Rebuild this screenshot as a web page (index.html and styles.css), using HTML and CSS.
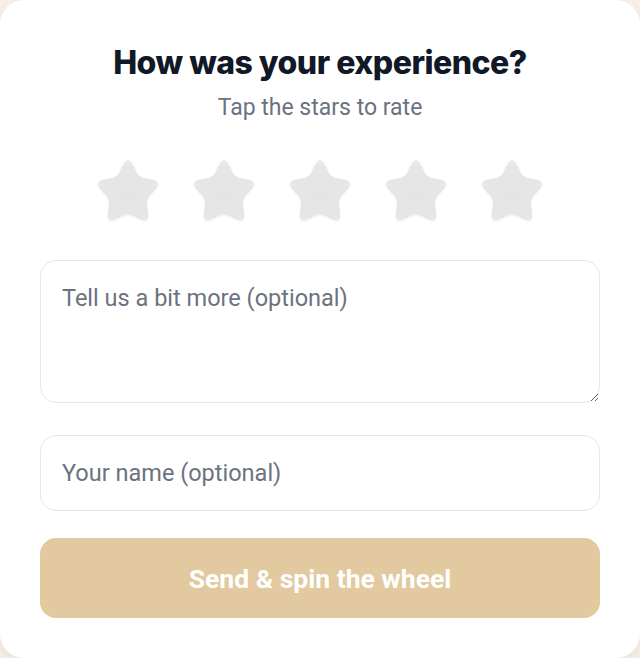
FILE: index.html
```html
<!DOCTYPE html>
<html lang="en">
<head>
<meta charset="utf-8">
<title>Rate your experience</title>
<link rel="stylesheet" href="styles.css">
</head>
<body>
<main class="card">
  <h1 class="title">How was your experience?</h1>
  <p class="subtitle">Tap the stars to rate</p>
  <div class="stars">
    <button class="star" aria-label="1 star"><svg viewBox="6 7.5 52 50" preserveAspectRatio="none"><use href="#star"/></svg></button>
    <button class="star" aria-label="2 stars"><svg viewBox="6 7.5 52 50" preserveAspectRatio="none"><use href="#star"/></svg></button>
    <button class="star" aria-label="3 stars"><svg viewBox="6 7.5 52 50" preserveAspectRatio="none"><use href="#star"/></svg></button>
    <button class="star" aria-label="4 stars"><svg viewBox="6 7.5 52 50" preserveAspectRatio="none"><use href="#star"/></svg></button>
    <button class="star" aria-label="5 stars"><svg viewBox="6 7.5 52 50" preserveAspectRatio="none"><use href="#star"/></svg></button>
  </div>
  <textarea class="field area" placeholder="Tell us a bit more (optional)"></textarea>
  <input class="field line" type="text" placeholder="Your name (optional)">
  <button class="send">Send &amp; spin the wheel</button>
</main>
<svg width="0" height="0" class="defs" aria-hidden="true">
  <defs>
    <radialGradient id="sg" cx="50%" cy="55%" r="55%">
      <stop offset="0" stop-color="#e4e4e4"/>
      <stop offset="0.8" stop-color="#e6e6e6"/>
      <stop offset="1" stop-color="#ebebeb"/>
    </radialGradient>
    <path id="star" fill="url(#sg)" stroke="#e2e2e2" stroke-width="0.6" d="M 27.84 11.98 Q 32 4 36.16 11.98 L 39.09 17.62 Q 41.40 22.06 46.33 22.89 L 52.61 23.93 Q 61.48 25.42 55.18 31.84 L 50.72 36.37 Q 47.21 39.94 47.95 44.89 L 48.90 51.18 Q 50.22 60.08 42.17 56.07 L 36.48 53.23 Q 32 51 27.53 53.22 L 21.83 56.07 Q 13.78 60.08 15.10 51.18 L 16.05 44.89 Q 16.79 39.94 13.28 36.37 L 8.82 31.84 Q 2.52 25.42 11.39 23.93 L 17.67 22.89 Q 22.60 22.06 24.91 17.62 Z"/>
  </defs>
</svg>
</body>
</html>
```

FILE: styles.css
```css
html, body {
  margin: 0;
  padding: 0;
  height: 100%;
}
body {
  background: #f8f1e9;
  font-family: Roboto, "Liberation Sans", sans-serif;
}
.card {
  box-sizing: border-box;
  height: 658px;
  background: #ffffff;
  border-radius: 24px;
  box-shadow: 0 4px 16px rgba(0, 0, 0, 0.08);
  padding: 44px 40px 0;
  display: flex;
  flex-direction: column;
  align-items: center;
}
.title {
  margin: 0;
  font-family: Inter, Roboto, sans-serif;
  font-weight: 800;
  font-size: 32px;
  line-height: 38px;
  letter-spacing: -0.5px;
  color: #111827;
}
.subtitle {
  margin: 10px 0 0;
  font-size: 23px;
  line-height: 32px;
  color: #6b7280;
}
.stars {
  display: flex;
  gap: 36px;
  margin-top: 36px;
}
.star {
  width: 60px;
  height: 60px;
  padding: 0;
  border: 0;
  background: none;
  cursor: pointer;
}
.star svg {
  width: 60px;
  height: 60px;
  display: block;
  overflow: visible;
  filter: drop-shadow(0 1px 1px rgba(0, 0, 0, 0.09));
}
.defs {
  position: absolute;
}
.field {
  box-sizing: border-box;
  width: 100%;
  border: 1px solid #e5e7eb;
  border-radius: 16px;
  font-family: Roboto, "Liberation Sans", sans-serif;
  font-size: 23.5px;
  color: #111827;
  background: #fff;
  outline: none;
}
.field::placeholder {
  color: #6b7280;
}
.area {
  margin-top: 40px;
  height: 143px;
  padding: 22px 21px;
  line-height: 30px;
  resize: vertical;
}
.line {
  margin-top: 32px;
  height: 76px;
  padding: 0 21px;
}
.send {
  margin-top: 27px;
  width: 100%;
  height: 80px;
  border: 0;
  border-radius: 16px;
  background: #e2c9a0;
  color: #ffffff;
  font-family: Roboto, "Liberation Sans", sans-serif;
  font-weight: 700;
  font-size: 26.5px;
}
```
